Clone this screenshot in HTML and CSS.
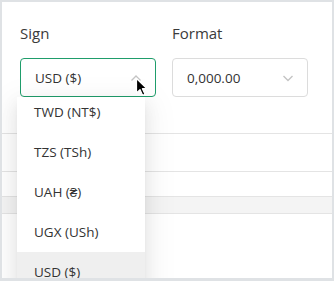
FILE: index.html
```html
<!DOCTYPE html>
<html>
<head>
<meta charset="utf-8">
<link rel="stylesheet" href="styles.css">
</head>
<body>
<div class="panel">
  <div class="fields">
    <div class="field">
      <div class="label">Sign</div>
      <div class="select select-open">
        <span class="value">USD ($)</span>
        <svg class="chev" width="12" height="8" viewBox="0 0 12 8"><path d="M1.5 6.5 L6 2 L10.5 6.5" fill="none" stroke="#c4c4c4" stroke-width="1.4"/></svg>
      </div>
    </div>
    <div class="field">
      <div class="label">Format</div>
      <div class="select">
        <span class="value">0,000.00</span>
        <svg class="chev" width="12" height="8" viewBox="0 0 12 8"><path d="M1.5 2 L6 6.5 L10.5 2" fill="none" stroke="#c4c4c4" stroke-width="1.4"/></svg>
      </div>
    </div>
  </div>
  <div class="table">
    <div class="row"></div>
    <div class="row-gap"></div>
    <div class="band"></div>
  </div>
  <div class="dropdown">
    <ul class="options">
      <li>TWD (NT$)</li>
      <li>TZS (TSh)</li>
      <li>UAH (₴)</li>
      <li>UGX (USh)</li>
      <li class="active">USD ($)</li>
    </ul>
  </div>
  <svg class="cursor" width="14" height="20" viewBox="0 0 14 20"><path d="M1.5 1.5 L1.5 16 L5 12.6 L7.6 18.3 L10 17.2 L7.4 11.7 L12 11.7 Z" fill="#000" stroke="#fff" stroke-width="1.2" stroke-linejoin="round"/></svg>
</div>
</body>
</html>
```
FILE: styles.css
```css
* { box-sizing: border-box; }
html, body { margin: 0; padding: 0; }
body {
  background: #dfe2e5;
  font-family: "Open Sans", "Liberation Sans", sans-serif;
  color: #333;
  padding: 2px 2px 3px 2px;
}
.panel {
  position: relative;
  height: 276px;
  width: 330px;
  background: #fff;
  overflow: hidden;
}
.fields {
  display: flex;
  gap: 16px;
  padding: 20px 0 0 18px;
}
.field { width: 136px; }
.label {
  font-size: 15px;
  line-height: 22px;
  color: #3a3a3a;
  margin-bottom: 14px;
}
.select {
  position: relative;
  height: 39px;
  border: 1px solid #dcdcdc;
  border-radius: 4px;
  display: flex;
  align-items: center;
  padding: 0 13px 0 14px;
  justify-content: space-between;
}
.select-open { border-color: #1f9d6b; }
.value { font-size: 13.5px; color: #333; }
.chev { display: block; }
.table {
  margin-top: 36px;
  border-top: 1px solid #e4e4e4;
}
.row { height: 38px; border-bottom: 1px solid #e4e4e4; }
.row-gap { height: 24px; }
.band {
  height: 18px;
  background: #f4f4f4;
  border-top: 1px solid #e4e4e4;
  border-bottom: 1px solid #e4e4e4;
}
.dropdown {
  position: absolute;
  left: 15px;
  top: 95px;
  width: 128px;
  height: 200px;
  background: #fff;
  box-shadow: 0 3px 6px -4px rgba(0,0,0,.12), 0 6px 16px 0 rgba(0,0,0,.08), 0 9px 28px 8px rgba(0,0,0,.05);
  overflow: hidden;
}
.options {
  list-style: none;
  margin: -5px 0 0;
  padding: 0;
}
.options li {
  height: 40px;
  display: flex;
  align-items: center;
  padding-left: 17px;
  font-size: 13.5px;
  color: #333;
}
.options li.active { background: #efefef; }
.cursor {
  position: absolute;
  left: 133px;
  top: 75px;
}
```
